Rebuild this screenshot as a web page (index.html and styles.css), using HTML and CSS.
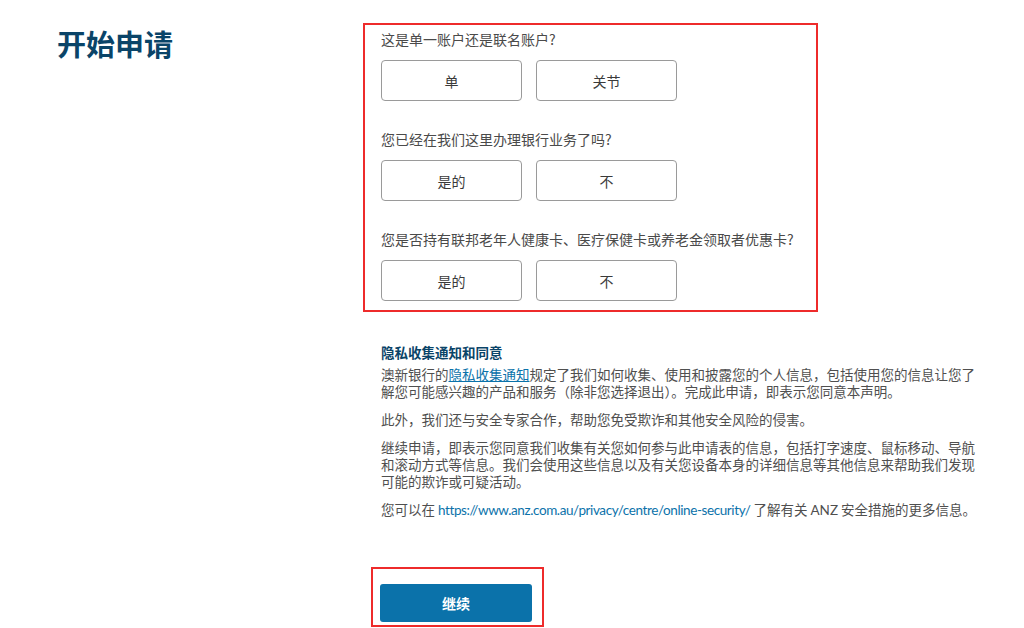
FILE: index.html
```html
<!DOCTYPE html>
<html lang="zh-CN">
<head>
<meta charset="utf-8">
<title>开始申请</title>
<link rel="stylesheet" href="styles.css">
</head>
<body>
<div class="page">
  <div class="side">
    <h1 class="title">开始申请</h1>
  </div>
  <div class="main">
    <div class="qbox">
      <div class="group">
        <p class="q">这是单一账户还是联名账户?</p>
        <div class="opts">
          <button class="opt">单</button>
          <button class="opt">关节</button>
        </div>
      </div>
      <div class="group">
        <p class="q">您已经在我们这里办理银行业务了吗?</p>
        <div class="opts">
          <button class="opt">是的</button>
          <button class="opt">不</button>
        </div>
      </div>
      <div class="group">
        <p class="q">您是否持有联邦老年人健康卡、医疗保健卡或养老金领取者优惠卡?</p>
        <div class="opts">
          <button class="opt">是的</button>
          <button class="opt">不</button>
        </div>
      </div>
    </div>
    <div class="privacy">
      <h2 class="ptitle">隐私收集通知和同意</h2>
      <p class="ptext">澳新银行的<a class="plink" href="#">隐私收集通知</a>规定了我们如何收集、使用和披露您的个人信息，包括使用您的信息让您了解您可能感兴趣的产品和服务（除非您选择退出）。完成此申请，即表示您同意本声明。</p>
      <p class="ptext">此外，我们还与安全专家合作，帮助您免受欺诈和其他安全风险的侵害。</p>
      <p class="ptext">继续申请，即表示您同意我们收集有关您如何参与此申请表的信息，包括打字速度、鼠标移动、导航和滚动方式等信息。我们会使用这些信息以及有关您设备本身的详细信息等其他信息来帮助我们发现可能的欺诈或可疑活动。</p>
      <p class="ptext">您可以在 <a class="url" href="#">https://www.anz.com.au/privacy/centre/online-security/</a> 了解有关 <span class="latin">ANZ</span> 安全措施的更多信息。</p>
    </div>
    <div class="cont-wrap">
      <button class="cont">继续</button>
    </div>
  </div>
</div>
</body>
</html>
```

FILE: styles.css
```css
html, body {
  margin: 0;
  padding: 0;
  background: #ffffff;
}

body {
  font-family: "Noto Sans CJK SC", "Noto Sans", sans-serif;
  color: #4a4a4a;
  overflow: hidden;
}

.page {
  display: flex;
  padding-top: 23px;
}

.side {
  width: 363px;
  padding-left: 57px;
  box-sizing: border-box;
  flex: none;
}

.title {
  margin: 0;
  font-size: 29px;
  line-height: 40px;
  font-weight: 700;
  color: #0a4468;
}

.main {
  width: 640px;
  flex: none;
}

.qbox {
  width: 455px;
  box-sizing: border-box;
  border: 2px solid #ee2b2b;
  padding: 4px 16px 9px 16px;
}

.group + .group {
  margin-top: 28px;
}

.q {
  margin: 0;
  font-size: 14px;
  line-height: 20px;
  color: #4a4a4a;
}

.opts {
  display: flex;
  gap: 14px;
  margin-top: 11px;
}

.opt {
  width: 141px;
  height: 41px;
  box-sizing: border-box;
  border: 1px solid #9a9a9a;
  border-radius: 4px;
  background: #ffffff;
  font-family: inherit;
  font-size: 14px;
  color: #3a3a3a;
  padding: 0;
}

.privacy {
  margin-top: 32px;
  padding-left: 18px;
  width: 605px;
}

.ptitle {
  margin: 0 0 5px 0;
  font-size: 13.5px;
  line-height: 17px;
  font-weight: 700;
  color: #0a4468;
}

.ptext {
  margin: 0 0 11px 0;
  font-size: 13.5px;
  line-height: 17px;
  color: #4f4f4f;
}

.ptext:last-child {
  margin-bottom: 0;
}

.plink {
  color: #0b72aa;
  text-decoration: underline;
}

.url {
  font-family: "Lato", "Noto Sans CJK SC", sans-serif;
  letter-spacing: -0.4px;
  color: #0b72aa;
  text-decoration: none;
}

.latin {
  font-family: "Lato", "Noto Sans CJK SC", sans-serif;
}

.cont-wrap {
  margin-top: 48px;
  margin-left: 8px;
  width: 173px;
  box-sizing: border-box;
  border: 2px solid #ee2b2b;
  padding: 15px 10px 3px 7px;
}

.cont {
  display: block;
  width: 152px;
  height: 38px;
  border: none;
  border-radius: 3px;
  background: #0b72aa;
  color: #ffffff;
  font-family: inherit;
  font-size: 14px;
  font-weight: 700;
  padding: 0;
}
```
